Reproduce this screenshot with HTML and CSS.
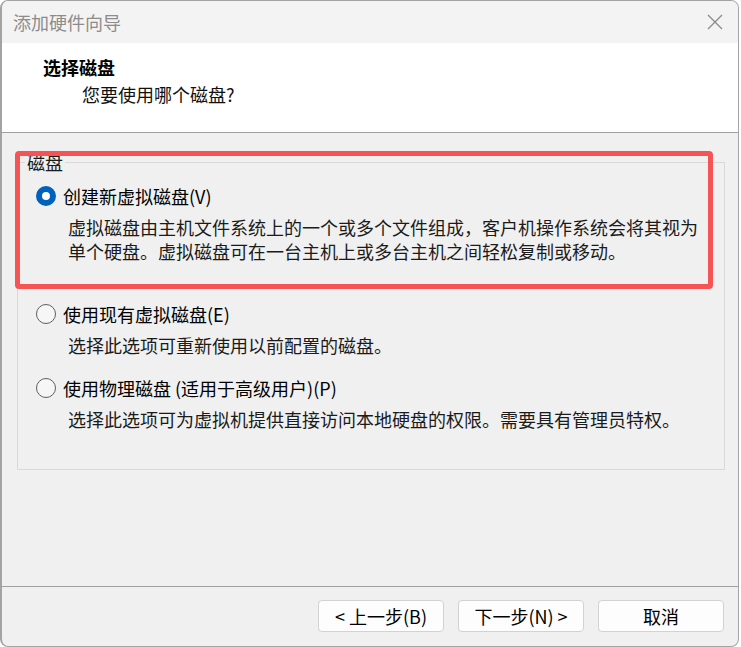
FILE: index.html
```html
<!DOCTYPE html>
<html lang="zh-CN">
<head>
    <meta charset="UTF-8">
    <meta name="viewport" content="width=device-width, initial-scale=1.0">
    <title>添加硬件向导</title>
    <link rel="stylesheet" href="styles.css">
</head>
<body>
    <div class="window">
        <div class="titlebar">
            <span class="title">添加硬件向导</span>
            <svg class="close" width="16" height="16" viewBox="0 0 16 16">
                <path d="M1 1 L15 15 M15 1 L1 15" stroke="#8a8a8a" stroke-width="1.3" fill="none"/>
            </svg>
        </div>

        <div class="header">
            <div class="heading">选择磁盘</div>
            <div class="subheading">您要使用哪个磁盘?</div>
        </div>

        <div class="content">
            <fieldset class="group">
                <legend>磁盘</legend>

                <div class="option option-first">
                    <div class="option-row">
                        <span class="radio checked"></span>
                        <span>创建新虚拟磁盘(V)</span>
                    </div>
                    <p class="option-desc">虚拟磁盘由主机文件系统上的一个或多个文件组成，客户机操作系统会将其视为<br>单个硬盘。虚拟磁盘可在一台主机上或多台主机之间轻松复制或移动。</p>
                </div>

                <div class="option option-second">
                    <div class="option-row">
                        <span class="radio"></span>
                        <span>使用现有虚拟磁盘(E)</span>
                    </div>
                    <p class="option-desc">选择此选项可重新使用以前配置的磁盘。</p>
                </div>

                <div class="option">
                    <div class="option-row">
                        <span class="radio"></span>
                        <span>使用物理磁盘 (适用于高级用户)(P)</span>
                    </div>
                    <p class="option-desc">选择此选项可为虚拟机提供直接访问本地硬盘的权限。需要具有管理员特权。</p>
                </div>
            </fieldset>
        </div>

        <div class="footer">
            <button class="btn">&lt; 上一步(B)</button>
            <button class="btn">下一步(N) &gt;</button>
            <button class="btn">取消</button>
        </div>

        <!-- red marker around the first option -->
        <div class="highlight"></div>
    </div>
</body>
</html>
```

FILE: styles.css
```css
html, body {
    margin: 0;
    padding: 0;
    background: #ffffff;
}
body {
    font-family: "Noto Sans CJK SC", "Noto Sans", sans-serif;
    font-size: 18px;
    color: #000;
}
.window {
    position: relative;
    box-sizing: border-box;
    width: 739px;
    height: 647px;
    border: 1px solid #a3a3a3;
    border-left-width: 2px;
    border-radius: 8px;
    overflow: hidden;
    background: #f0f0f0;
    display: flex;
    flex-direction: column;
}
.titlebar {
    height: 42px;
    flex: none;
    background: #f3f3f3;
    display: flex;
    align-items: center;
    justify-content: space-between;
    padding: 0 15px 0 11px;
}
.title {
    color: #8c8c8c;
    line-height: 42px;
}
.close {
    display: block;
    margin-top: -1px;
}
.header {
    flex: none;
    box-sizing: border-box;
    height: 90px;
    background: #ffffff;
    border-bottom: 1px solid #a0a0a0;
    padding: 12px 0 0 41px;
}
.heading {
    font-weight: bold;
    line-height: 24px;
}
.subheading {
    margin: 3px 0 0 39px;
    line-height: 24px;
    color: #111;
}
.content {
    flex: 1;
    padding: 19px 13px 0 15px;
}
.group {
    margin: 0;
    padding: 12px 0 38px 0;
    border: 1px solid #d9d9d9;
    min-width: 0;
}
.group legend {
    margin-left: 7px;
    padding: 0 2px;
    line-height: 20px;
    color: #1a1a1a;
}
.option {
    padding-left: 18px;
}
.option-first {
    margin-bottom: 39px;
}
.option-second {
    margin-bottom: 19px;
}
.option-row {
    display: flex;
    align-items: center;
    height: 24px;
    gap: 7px;
    white-space: nowrap;
}
.option-desc {
    margin: 7px 0 0 32px;
    line-height: 24px;
    white-space: nowrap;
    color: #1b1b1b;
}
.radio {
    box-sizing: border-box;
    width: 20px;
    height: 20px;
    flex: none;
    border-radius: 50%;
    border: 1px solid #5f5f5f;
    background: #f6f6f6;
}
.radio.checked {
    border: 6px solid #0060bd;
    background: #ffffff;
}
.footer {
    flex: none;
    border-top: 1px solid #a0a0a0;
    padding: 13px 14px 14px 0;
    display: flex;
    justify-content: flex-end;
    gap: 14px;
}
.btn {
    box-sizing: border-box;
    width: 126px;
    height: 32px;
    padding: 0;
    background: #fdfdfd;
    border: 1px solid #d2d2d2;
    border-radius: 4px;
    font-family: inherit;
    font-size: 18px;
    color: #000;
}
.highlight {
    position: absolute;
    left: 13px;
    top: 150px;
    width: 698px;
    height: 138px;
    box-sizing: border-box;
    border: 5px solid #f65454;
    border-radius: 4px;
}
```
